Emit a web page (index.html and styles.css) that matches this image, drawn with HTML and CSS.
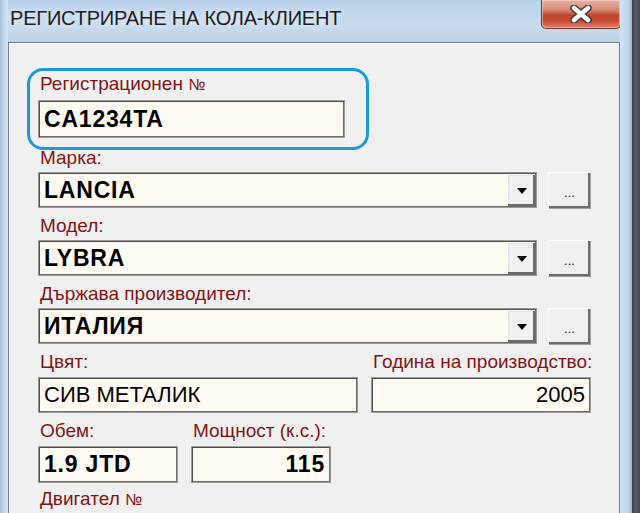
FILE: index.html
```html
<!DOCTYPE html>
<html>
<head>
<meta charset="utf-8">
<link rel="stylesheet" href="styles.css">
</head>
<body>
<div class="screen">
  <div class="frame-left"></div>
  <div class="window">
    <div class="titlebar">
      <div class="title">РЕГИСТРИРАНЕ НА КОЛА-КЛИЕНТ</div>
      <div class="close">
        <svg width="24" height="18" viewBox="0 0 24 18">
          <path d="M5 3 L19 15 M19 3 L5 15" stroke="#3a3a3a" stroke-width="7.5" stroke-linecap="round"/>
          <path d="M5 3 L19 15 M19 3 L5 15" stroke="#ffffff" stroke-width="4.5" stroke-linecap="round"/>
        </svg>
      </div>
    </div>
    <div class="panel">
      <div class="highlight"></div>
      <div class="lbl l1">Регистрационен <span class="no">№</span></div>
      <div class="box w-reg v-reg"><span class="val bold">CA1234TA</span></div>

      <div class="lbl l2">Марка:</div>
      <div class="combo-row">
        <div class="box combo"><span class="val bold">LANCIA</span><div class="dd"><span class="tri"></span></div></div>
        <div class="btn">...</div>
      </div>

      <div class="lbl l3">Модел:</div>
      <div class="combo-row">
        <div class="box combo"><span class="val bold">LYBRA</span><div class="dd"><span class="tri"></span></div></div>
        <div class="btn">...</div>
      </div>

      <div class="lbl l3">Държава производител:</div>
      <div class="combo-row">
        <div class="box combo"><span class="val bold">ИТАЛИЯ</span><div class="dd"><span class="tri"></span></div></div>
        <div class="btn">...</div>
      </div>

      <div class="row r1">
        <div class="col c-color">
          <div class="lbl">Цвят:</div>
          <div class="box w-color"><span class="val">СИВ МЕТАЛИК</span></div>
        </div>
        <div class="col c-year">
          <div class="lbl">Година на производство:</div>
          <div class="box w-year right"><span class="val">2005</span></div>
        </div>
      </div>

      <div class="row r2">
        <div class="col c-vol">
          <div class="lbl">Обем:</div>
          <div class="box w-small"><span class="val bold">1.9 JTD</span></div>
        </div>
        <div class="col">
          <div class="lbl">Мощност (к.с.):</div>
          <div class="box w-small right"><span class="val bold">115</span></div>
        </div>
      </div>

      <div class="lbl l-last">Двигател <span class="no">№</span></div>
    </div>
  </div>
  <div class="frame-right"></div>
  <div class="desk"></div>
</div>
</body>
</html>
```

FILE: styles.css
```css
* { box-sizing: border-box; }
html, body { margin: 0; padding: 0; }
body {
  width: 640px;
  height: 513px;
  overflow: hidden;
  font-family: "Liberation Sans", Arial, sans-serif;
  background: #c4d9ee;
}
.screen {
  display: flex;
  width: 640px;
  height: 513px;
}
.frame-left {
  width: 8px;
  flex: none;
  background: linear-gradient(to right, #a9c3dd, #c6dbef 60%, #d3e4f4);
}
.window {
  width: 612px;
  flex: none;
  display: flex;
  flex-direction: column;
  background: linear-gradient(to bottom, #c3d8ee 0%, #d2e3f4 40px, #cfe2f5 100%);
}
.frame-right {
  width: 12px;
  flex: none;
  background: linear-gradient(to right, #d2e4f5, #bcd3ea 70%, #9ab4cf);
}
.desk {
  width: 8px;
  flex: none;
  background: linear-gradient(to right, #3d3d3d, #5a5a5a 40%, #474747);
}
.titlebar {
  height: 42px;
  flex: none;
  display: flex;
  justify-content: space-between;
  align-items: flex-start;
  background: linear-gradient(to bottom, #b9d1ea 0%, #c8dcf0 60%, #bcd2e9 100%);
}
.title {
  margin-top: 7px;
  margin-left: 2px;
  font-size: 20px;
  color: #1b1b24;
  letter-spacing: -0.2px;
  text-shadow: 0 0 6px rgba(255,255,255,0.9);
}
.close {
  width: 80px;
  height: 29px;
  margin-right: -1px;
  border: 1px solid #6e3026;
  border-top: none;
  border-radius: 0 0 5px 5px;
  background: linear-gradient(to bottom, #e7b3a5 0%, #d88a76 35%, #c0432b 55%, #c94a30 75%, #e0826a 100%);
  box-shadow: inset 0 0 0 1px rgba(255,210,200,0.6);
  display: flex;
  align-items: center;
  justify-content: center;
}
.panel {
  position: relative;
  flex: 1;
  background: #f0f0f0;
  border: 1px solid #6f7e8e;
  border-bottom: none;
  box-shadow: inset 1px 1px 0 #ffffff;
  padding: 0 0 0 29px;
}
.highlight {
  position: absolute;
  left: 18px;
  top: 25px;
  width: 342px;
  height: 82px;
  border: 3px solid #1c9ad8;
  border-radius: 16px;
}
.lbl {
  height: 20px;
  line-height: 20px;
  font-size: 19px;
  color: #801515;
  white-space: nowrap;
  padding-left: 2px;
}
.no {
  font-size: 16px;
  letter-spacing: -1px;
}
.l1 { margin-top: 31px; margin-bottom: 6px; }
.l2 { margin-top: 10px; margin-bottom: 4px; }
.l3 { margin-top: 8px; margin-bottom: 4px; }
.l-last { margin-top: 6px; }
.box {
  height: 36px;
  background: #fdfbf1;
  border: 1px solid #9c9c9c;
  box-shadow: inset 1px 1px 0 #4e4e4e, inset -1px -1px 0 #6c6c6c;
  display: flex;
  align-items: center;
  padding: 0 5px;
  position: relative;
}
.val {
  font-size: 22px;
  color: #000;
  white-space: nowrap;
}
.bold {
  font-weight: bold;
  font-size: 23px;
  letter-spacing: 0.8px;
}
.right { justify-content: flex-end; }
.w-reg { width: 307px; }
.v-reg { height: 38px; }
.combo-row {
  display: flex;
  gap: 11px;
}
.combo {
  width: 499px;
  padding-right: 0;
  justify-content: space-between;
}
.dd {
  width: 28px;
  height: 32px;
  margin-right: 1px;
  background: #f0f0f0;
  border-left: 1px solid #ffffff;
  border-top: 1px solid #ffffff;
  box-shadow: inset -2px -2px 0 #6a6a6a, inset 1px 1px 0 #e4e4e4;
  display: flex;
  align-items: center;
  justify-content: center;
}
.tri {
  width: 0;
  height: 0;
  border-left: 5px solid transparent;
  border-right: 5px solid transparent;
  border-top: 6px solid #000;
  margin-top: 1px;
}
.btn {
  width: 42px;
  height: 36px;
  background: #f0f0f0;
  border-top: 1px solid #ffffff;
  border-left: 1px solid #ffffff;
  box-shadow: inset -2px -2px 0 #6d6d6d, 1px 1px 0 #a0a0a0;
  display: flex;
  align-items: flex-end;
  justify-content: center;
  padding-bottom: 8px;
  font-size: 13px;
  color: #222;
}
.row {
  display: flex;
  gap: 13px;
}
.r1 { margin-top: 8px; }
.r2 { margin-top: 8px; }
.col {
  display: flex;
  flex-direction: column;
}
.col .lbl { margin-bottom: 5px; }
.w-color { width: 320px; }
.w-year { width: 220px; }
.w-small { width: 140px; height: 37px; }
```
